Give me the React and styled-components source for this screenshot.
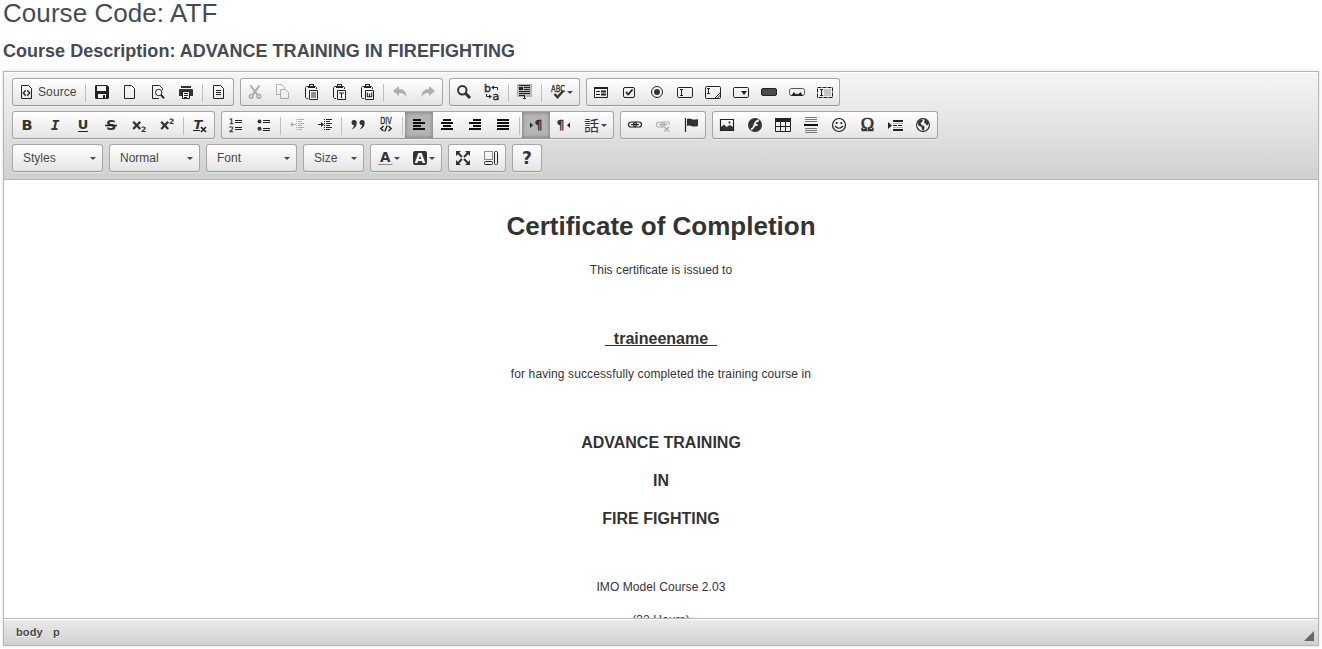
import React from 'react';
import styled, { createGlobalStyle, css } from 'styled-components';

const Global = createGlobalStyle`
  * { box-sizing: border-box; }
  html, body { margin: 0; padding: 0; background: #fff; }
  body { font-family: "Liberation Sans", Arial, sans-serif; overflow: hidden; }
`;

const Page = styled.main`
  display: flex;
  flex-direction: column;
  width: 1322px;
  height: 649px;
  padding: 0 3px 3px;
  overflow: hidden;
`;
const Title = styled.h1`
  margin: 0;
  height: 38px;
  font-size: 26px;
  line-height: 26px;
  font-weight: 400;
  letter-spacing: 0.06px;
  color: #444b54;
`;
const Subtitle = styled.h2`
  margin: 0;
  height: 33px;
  font-size: 18px;
  line-height: 27px;
  font-weight: 700;
  letter-spacing: 0.02px;
  color: #444b54;
`;
const Editor = styled.section`
  display: flex;
  flex-direction: column;
  width: 1316px;
  height: 575px;
  border: 1px solid #b6b6b6;
  box-shadow: 0 0 3px rgba(0, 0, 0, 0.15);
`;
const Toolbar = styled.div`
  display: flex;
  flex-direction: column;
  gap: 5px;
  height: 108px;
  padding: 6px 8px 0;
  background: linear-gradient(#f5f5f5, #cfd1cf);
  border-bottom: 1px solid #b6b6b6;
  box-shadow: inset 0 1px 0 #fff;
`;
const Row = styled.div`
  display: flex;
  gap: 6px;
  height: 28px;
`;
const box = css`
  display: flex;
  height: 28px;
  border: 1px solid #a6a6a6;
  border-bottom-color: #979797;
  border-radius: 3px;
  background: linear-gradient(#fff, #e4e4e4);
  box-shadow: 0 1px 0 rgba(255, 255, 255, 0.5), inset 0 1px 0 #fff;
`;
const Group = styled.div`${box}`;
const Button = styled.button`
  display: flex;
  align-items: center;
  flex: none;
  width: ${(p) => p.$width || 28}px;
  height: 26px;
  padding: 0 6px;
  border: 0;
  font: inherit;
  color: #474747;
  background: ${(p) => (p.$on ? '#b5b5b5' : 'transparent')};
  box-shadow: ${(p) => (p.$on ? 'inset 0 0 4px rgba(0,0,0,.4)' : 'none')};
`;
const Separator = styled.span`
  width: 1px;
  height: 18px;
  margin: 5px 2px 0;
  background: #c0c0c0;
`;
const Glyph = styled.svg`
  display: block;
  flex: none;
  width: 16px;
  height: 16px;
  overflow: visible;
  opacity: ${(p) => (p.$off ? 0.32 : 1)};
`;
const Label = styled.span`
  padding-left: 3px;
  font-size: 12px;
  line-height: 18px;
  letter-spacing: 0.1px;
`;
const Arrow = styled.span`
  width: 0;
  height: 0;
  margin: ${(p) => p.$margin || '1px 0 0 1px'};
  border: 3px solid transparent;
  border-top-color: #474747;
  border-bottom-width: 0;
`;
const Combo = styled.button`
  ${box}
  align-items: center;
  justify-content: space-between;
  width: ${(p) => p.$width}px;
  padding: 0 6px 0 10px;
  font: 12px "Liberation Sans", Arial, sans-serif;
  color: #474747;
`;
const Contents = styled.article`
  flex: 1;
  min-height: 0;
  padding-top: 20px;
  overflow: hidden;
  background: #fff;
  color: #333;
  text-align: center;
`;
const Line = styled.p`
  margin: 0;
  height: ${(p) => p.$height}px;
  line-height: ${(p) => p.$height}px;
  font-size: ${(p) => p.$size || 12}px;
  font-weight: ${(p) => (p.$bold ? 700 : 400)};
  letter-spacing: ${(p) => p.$spacing || 0}px;
  text-decoration: ${(p) => (p.$underline ? 'underline' : 'none')};
`;
const Footer = styled.footer`
  display: flex;
  justify-content: space-between;
  height: 27px;
  padding: 0 4px 0 12px;
  border-top: 1px solid #b6b6b6;
  background: linear-gradient(#ebebeb, #cfd1cf);
  box-shadow: inset 0 1px 0 #fff;
`;
const Path = styled.nav`
  display: flex;
  gap: 10px;
  font-size: 11px;
  line-height: 26px;
  font-weight: 700;
  letter-spacing: 0.15px;
  color: #474747;
  text-shadow: 0 1px 0 #fff;
`;
const Resizer = styled.span`
  align-self: flex-end;
  margin-bottom: 4px;
  border: 5px solid #666;
  border-top-color: transparent;
  border-left-color: transparent;
`;

const D = '#222';
const Stroke = ({ d, w = 1, c = D }) => <path d={d} fill="none" stroke={c} strokeWidth={w} />;
const Fill = ({ d, c = D }) => <path d={d} fill={c} />;
const T = ({ x, y, s, children, f = 'DejaVu Sans', b = 700, ...rest }) => (
  <text x={x} y={y} fontSize={s} fontFamily={`"${f}", sans-serif`} fontWeight={b} fill="#333" {...rest}>{children}</text>
);
const sheet = 'M2.5 1.5H9.5L12.5 4.5V14.5H2.5Z';
const Clip = ({ children }) => (
  <>
    <Stroke d="M5 14.5H3.5L2.5 13.5V3.5L3.5 2.5H5M11 2.5H12.5L13.5 3.5V5" />
    <Fill d="M5 2H6V0H11V2H12V4H5Z" />
    <Fill d="M7 1H10V2H7Z" c="#eee" />
    <path d="M6.5 6.5H14.5V15.5H6.5Z" fill="#fafafa" stroke={D} />
    {children}
  </>
);

const icons = {
  source: <><Stroke d={sheet} /><Stroke d="M6.7 6.3L4.3 9L6.7 11.7M8.3 6.3L10.7 9L8.3 11.7" w={1.3} /></>,
  save: <><Fill d="M2 1H13L15 3V14L14 15H2L1 14V2Z" /><Fill d="M4 2H12V7H3V2ZM4 10H12V14H4Z" c="#f2f2f2" /><Fill d="M9 11H11V14H9Z" /></>,
  page: <Stroke d={sheet} />,
  preview: <><Stroke d="M9 14.5H2.5V1.5H9.5L12.5 4.5V6" /><circle cx="8.7" cy="8.5" r="3.2" fill="#fafafa" stroke={D} /><Stroke d="M11 10.8L14 14.3" w={1.8} /></>,
  print: <><Fill d="M3 2H13V4H3ZM1.5 5H14.5L15 6V12H1V6Z" c="#333" /><path d="M4.5 7.5H11.5V14.5H4.5Z" fill="#fafafa" stroke={D} /><Stroke d="M6 9.5H10M6 11.5H10M6 13.5H9" /></>,
  template: <><Stroke d={sheet} /><Stroke d="M5 6.5H10M5 8.5H10M5 10.5H10" /></>,
  cut: <><Stroke d="M3.5 1.5L10.5 11M12.5 1.5L5.5 11" w={2} c="#111" /><circle cx="4.2" cy="12.3" r="1.8" fill="none" stroke={D} strokeWidth="1.6" /><circle cx="11.8" cy="12.3" r="1.8" fill="none" stroke={D} strokeWidth="1.6" /></>,
  copy: <><Stroke d="M5 10.5H1.5V.5H6.5L9.5 3.5V5" /><Stroke d="M5.5 5.5H10.5L13.5 8.5V14.5H5.5Z" /></>,
  paste: <Clip><Stroke d="M8 9H13M8 11H13M8 13H13" /></Clip>,
  pasteText: <Clip><Stroke d="M8 9H13M10.5 9V14" w={1.1} /></Clip>,
  pasteWord: <Clip><Stroke d="M8.3 8.5V12.8H10.5V9.5V12.8H12.7V8.5" w={1.1} /></Clip>,
  undo: <Fill d="M1 7L7 2V5C12 5 14.5 8 14.5 13C12.5 10 11 9 7 9V12Z" />,
  redo: <Fill d="M15 7L9 2V5C4 5 1.5 8 1.5 13C3.5 10 5 9 9 9V12Z" />,
  find: <><circle cx="6.3" cy="6.2" r="4.2" fill="none" stroke="#333" strokeWidth="2" /><Stroke d="M9.2 9L14 14" w={3} c="#333" /></>,
  replace: <><T x="0" y="8" s="11" b={400} stroke="#222" strokeWidth=".4">b</T><T x="8.5" y="15.5" s="11" b={400} stroke="#222" strokeWidth=".4">a</T><Stroke d="M13.5 6V3.5H9M2.5 10V12.5H7" /><Fill d="M7 3.5L10 1.5V5.5ZM8 12.5L5 10.5V14.5Z" /></>,
  selectAll: <><Fill d="M0 0H15V13H0Z" c="#b5b5b5" /><Stroke d="M2 1.5H13M7 3.5H13M7 5.5H13M2 7.5H13M2 9.5H13M2 11.5H8M6 14.5H9M7.5 11V15" /><Fill d="M2 3H6V6H2Z" /></>,
  spell: <><T x="1" y="8" s="9" b={400} textLength="14" lengthAdjust="spacingAndGlyphs" stroke="#222" strokeWidth=".3">ABC</T><Stroke d="M4.5 10L7.5 13.3L13.5 6.5" w={2.4} c="#333" /></>,
  form: <><Stroke d="M1.5 3.5H14.5V13.5H1.5Z" /><Fill d="M1 3H15V5H1Z" /><Stroke d="M3 7.5H7M3 10.5H7" /><Stroke d="M8 7.5H13M8 10.5H13" w={2} /></>,
  check: <><rect x="2.5" y="3.5" width="11" height="10" rx="1.5" fill="none" stroke={D} /><Stroke d="M5 8L7.2 10.5L11.5 5.5" w={1.8} /></>,
  radio: <><circle cx="8" cy="8" r="5.5" fill="none" stroke={D} /><circle cx="8" cy="8" r="3" fill="#333" /></>,
  field: <><rect x=".5" y="3.5" width="15" height="10" rx="1.2" fill="none" stroke={D} /><Stroke d="M3 5.5H6M4.5 5.5V11.5M3 11.5H6" /></>,
  area: <><rect x=".5" y="2.5" width="15" height="12" rx="1.2" fill="none" stroke={D} /><Stroke d="M2 4.5H5M3.5 4.5V9.5M2 9.5H5M9.5 14.5L15.5 8.5M12 14.5L15.5 11" /></>,
  select: <><rect x=".5" y="3.5" width="15" height="10" rx="1.2" fill="none" stroke={D} /><Fill d="M8 7H14L11 11Z" /></>,
  button: <><rect x=".5" y="4.5" width="15" height="7" rx="1.5" fill="#4b4b4b" stroke={D} /></>,
  imageButton: <><rect x=".5" y="4.5" width="15" height="7" rx="2" fill="#eee" stroke="#555" /><Fill d="M2 12L5 8L7 10.5L8 9.5L9 10.5L11.5 8L14 12Z" /></>,
  hidden: <><path d="M.5 3.5H15.5V13.5H.5Z" fill="none" stroke={D} strokeDasharray="4 1" /><Fill d="M7 5H14V12H7Z" c="#c6c6c6" /><Stroke d="M3 5.5H6M4.5 5.5V11.5M3 11.5H6" /></>,
  bold: <T x="2.6" y="13.3" s="14.5">B</T>,
  italic: <T x="3.7" y="13.3" s="14.5" f="DejaVu Sans Mono" fontStyle="italic">I</T>,
  underline: <><T x="2.8" y="12" s="13">U</T><Stroke d="M3 14.5H13" /></>,
  strike: <><T x="3" y="13.3" s="14.5">S</T><Stroke d="M2 8.5H14" w={1.5} /></>,
  sub: <><Stroke d="M2.2 4.8L9.2 12M9.2 4.8L2.2 12" w={2.3} c="#333" /><T x="10" y="15" s="7.5">2</T></>,
  sup: <><Stroke d="M2.2 4.8L9.2 12M9.2 4.8L2.2 12" w={2.3} c="#333" /><T x="10" y="7" s="7.5">2</T></>,
  remove: <><T x="1.5" y="12" s="13" fontStyle="italic">T</T><Stroke d="M1 13.5H8" /><Stroke d="M9 10L14 15M14 10L9 15" w={1.7} /></>,
  numbered: <><T x="1" y="7" s="7.5" b={400} stroke="#222" strokeWidth=".3">1</T><T x="1" y="15" s="7.5" b={400} stroke="#222" strokeWidth=".3">2</T><Stroke d="M7 3.5H14M7 5.5H14M7 10.5H14M7 12.5H14" /></>,
  bulleted: <><circle cx="3.5" cy="4.5" r="2" fill="#333" /><circle cx="3.5" cy="11.7" r="2" fill="#333" /><Stroke d="M7 3.5H14M7 5.5H14M7 11.5H14M7 13.5H14" /></>,
  outdent: <><Stroke d="M9 2.5H15M9 4.5H13M9 6.5H15M9 8.5H13M9 10.5H15M9 12.5H13M3 7.5H7" /><path d="M7.5 2V14" stroke={D} strokeDasharray="1 1" /><Fill d="M1 7.5L4 5V10Z" /></>,
  indent: <><Stroke d="M9 2.5H15M9 4.5H13M9 6.5H15M9 8.5H13M9 10.5H15M9 12.5H13M1 7.5H5" /><path d="M7.5 2V14" stroke={D} strokeDasharray="1 1" /><Fill d="M7 7.5L4 5V10Z" /></>,
  quote: <Fill c="#333" d="M4 3A2.5 2.5 0 0 1 6.7 6C6.7 9 5 11.5 1.5 12.5C3 11 4 9.5 4 8A2.5 2.5 0 0 1 4 3ZM12 3A2.5 2.5 0 0 1 14.7 6C14.7 9 13 11.5 9.5 12.5C11 11 12 9.5 12 8A2.5 2.5 0 0 1 12 3Z" />,
  div: <><T x="2.3" y="6.8" s="8.5" b={400} textLength="11.5" lengthAdjust="spacingAndGlyphs" stroke="#222" strokeWidth=".3">DIV</T><Stroke d="M5.5 9L2.8 11.5L5.5 14M10.5 9L13.2 11.5L10.5 14M9.3 8.5L6.7 14.5" w={1.4} /></>,
  left: <Stroke d="M2 3H10M2 6H14M2 9H10M2 12H14" w={1.8} c="#111" />,
  center: <Stroke d="M4 3H12M2 6H14M4 9H12M2 12H14" w={1.8} c="#111" />,
  right: <Stroke d="M6 3H14M2 6H14M6 9H14M2 12H14" w={1.8} c="#111" />,
  justify: <Stroke d="M2 3H14M2 6H14M2 9H14M2 12H14" w={1.8} c="#111" />,
  ltr: <><T x="6.6" y="12" s="12.5" b={400} stroke="#222" strokeWidth=".3">¶</T><Fill d="M2 5.5L5 8.3L2 11Z" /></>,
  rtl: <><T x=".6" y="12" s="12.5" b={400} stroke="#222" strokeWidth=".3">¶</T><Fill d="M14 5.5L11 8.3L14 11Z" /></>,
  language: <T x="0" y="14" s="15" f="Noto Sans CJK JP" b={400}>話</T>,
  link: <><rect x="1.5" y="5" width="8" height="5" rx="2.5" fill="none" stroke={D} strokeWidth="1.2" /><rect x="6.5" y="5" width="8" height="5" rx="2.5" fill="none" stroke={D} strokeWidth="1.2" /><Stroke d="M4 7.5H12" w={1.2} /></>,
  unlink: <><rect x="1.5" y="5" width="8" height="5" rx="2.5" fill="none" stroke={D} strokeWidth="1.2" /><path d="M7 10Q5.8 5 9 5H12Q14.5 5 14.5 7.5" fill="none" stroke={D} strokeWidth="1.2" /><Stroke d="M4 7.5H12M9.5 10L14 14.5M14 10L9.5 14.5" w={1.4} /></>,
  anchor: <><Stroke d="M2.5 1V15" w={1.2} /><Fill d="M4 2C7 0 9 4 15 2V9C9 11 7 7 4 9Z" c="#333" /></>,
  image: <><Stroke d="M1.5 2.5H14.5V13.5H1.5Z" w={1.2} /><Fill d="M2 13V10L5 7.5L7.5 10L11 8L14 10V13Z" c="#333" /><circle cx="10.5" cy="5.5" r="1" fill={D} /></>,
  flash: <><circle cx="8" cy="8" r="7" fill="#333" /><path d="M12 3.5C8.5 3.5 8.2 6 7.3 8.5C6.6 10.7 6 12 3.8 12.3M6.5 8H10.5" fill="none" stroke="#eee" strokeWidth="1.8" /></>,
  table: <><Stroke d="M.5 2.5H15.5V14.5H.5ZM.5 9.5H15.5M5.5 5V14M10.5 5V14" /><Fill d="M0 1H16V5H0Z" /></>,
  rule: <><Stroke d="M2 .5H14M2 2.5H14M2 4.5H14M2 11.5H14M2 13.5H14M2 15.5H14" c="#777" /><Stroke d="M1 8H15" w={2} c="#111" /></>,
  smiley: <><circle cx="8" cy="8" r="6.5" fill="none" stroke={D} strokeWidth="1.2" /><circle cx="5.7" cy="6" r="1.1" fill={D} /><circle cx="10.3" cy="6" r="1.1" fill={D} /><Stroke d="M4 9Q8 13.5 12 9" w={1.2} /></>,
  omega: <T x="1.7" y="14.3" s="18" f="Liberation Serif" b={400} stroke="#333" strokeWidth=".7">Ω</T>,
  pageBreak: <><Fill d="M1 5L5 8.5L1 12Z" /><Stroke d="M6 4H16M6 13H16" w={2} /><path d="M6 8.5H16" stroke={D} strokeDasharray="4 1" /><Stroke d="M6 6.5H16M6 10.5H16" c="#888" w={0.6} /></>,
  iframe: <><circle cx="8" cy="8" r="6.4" fill="none" stroke={D} strokeWidth="1.1" /><Fill c="#333" d="M2.5 5.5L5 2.5L8 3L7 5L5.5 6L6.5 8L9.5 9.5L9 13.5L7 12.5L6.5 10L3.5 8.5ZM10 2L13 4.5L13.7 7L12 8.5L10.5 6.5L9 5.5Z" /></>,
  color: <><T x="2.9" y="12" s="13.5">A</T><Fill d="M1 14H15.5V15H1Z" c="#888" /></>,
  bg: <><rect x="1" y="1" width="14" height="14" rx="2" fill="#333" /><T x="2.8" y="12.7" s="13.5" style={{ fill: '#fff' }}>A</T></>,
  maximize: <><Stroke d="M2 2L7 7M14 2L9 7M2 14L7 9M14 14L9 9" w={2} c="#333" /><Fill c="#333" d="M1 1H6L1 6ZM15 1V6L10 1ZM1 15V10L6 15ZM15 15H10L15 10Z" /></>,
  blocks: <><path d="M1.5 1.5H9.5V9.5H1.5Z" fill="none" stroke={D} strokeDasharray="1 1" /><rect x="1.5" y="11.5" width="8" height="3" rx="1" fill="none" stroke={D} /><rect x="11.5" y="1.5" width="3" height="13" rx="1" fill="none" stroke={D} /></>,
  about: <T x="3" y="14" s="17">?</T>,
};

const Tool = ({ name, label, width, arrow, on, off }) => (
  <Button $width={width || (arrow ? 35 : 28)} $on={on} aria-label={name}>
    <Glyph viewBox="0 0 16 16" $off={off}>{icons[name]}</Glyph>
    {label && <Label>{label}</Label>}
    {arrow && <Arrow />}
  </Button>
);

const offTools = ['cut', 'copy', 'undo', 'redo', 'outdent', 'unlink'];
const onTools = ['left', 'ltr'];
const arrowTools = ['spell', 'language', 'color', 'bg'];
const Tools = ({ names }) => (
  <Group>
    {names.split(' ').map((n, i) => {
      if (n === '|') return <Separator key={i} />;
      if (n === 'source') return <Tool key={n} name={n} label="Source" width={70} />;
      return <Tool key={n} name={n} off={offTools.includes(n)} on={onTools.includes(n)} arrow={arrowTools.includes(n)} />;
    })}
  </Group>
);
const Select = ({ children, width = 91 }) => (
  <Combo $width={width}>{children}<Arrow $margin="1px 0 0" /></Combo>
);

export default function App() {
  return (
    <Page>
      <Global />
      <Title>Course Code: ATF</Title>
      <Subtitle>Course Description: ADVANCE TRAINING IN FIREFIGHTING</Subtitle>
      <Editor>
        <Toolbar>
          <Row>
            <Tools names="source | save page preview print | template" />
            <Tools names="cut copy paste pasteText pasteWord | undo redo" />
            <Tools names="find replace | selectAll | spell" />
            <Tools names="form check radio field area select button imageButton hidden" />
          </Row>
          <Row>
            <Tools names="bold italic underline strike sub sup | remove" />
            <Tools names="numbered bulleted | outdent indent | quote div | left center right justify | ltr rtl language" />
            <Tools names="link unlink anchor" />
            <Tools names="image flash table rule smiley omega pageBreak iframe" />
          </Row>
          <Row>
            <Select>Styles</Select>
            <Select>Normal</Select>
            <Select>Font</Select>
            <Select width={61}>Size</Select>
            <Tools names="color bg" />
            <Tools names="maximize blocks" />
            <Tools names="about" />
          </Row>
        </Toolbar>
        <Contents>
          <Line as="h1" $height={52} $size={26} $bold>Certificate of Completion</Line>
          <Line $height={37} $spacing={0.06}>This certificate is issued to</Line>
          <Line $height={32}>&nbsp;</Line>
          <Line $height={35} $size={16} $bold $underline>_traineename_</Line>
          <Line $height={37} $spacing={0.11}>for having successfully completed the training course in</Line>
          <Line $height={31}>&nbsp;</Line>
          <Line $height={38} $size={16} $bold>ADVANCE TRAINING</Line>
          <Line $height={38} $size={16} $bold>IN</Line>
          <Line $height={38} $size={16} $bold>FIRE FIGHTING</Line>
          <Line $height={32}>&nbsp;</Line>
          <Line $height={35} $spacing={0.08}>IMO Model Course 2.03</Line>
          <Line $height={30} $spacing={0.08}>(32 Hours)</Line>
        </Contents>
        <Footer>
          <Path><span>body</span><span>p</span></Path>
          <Resizer />
        </Footer>
      </Editor>
    </Page>
  );
}
